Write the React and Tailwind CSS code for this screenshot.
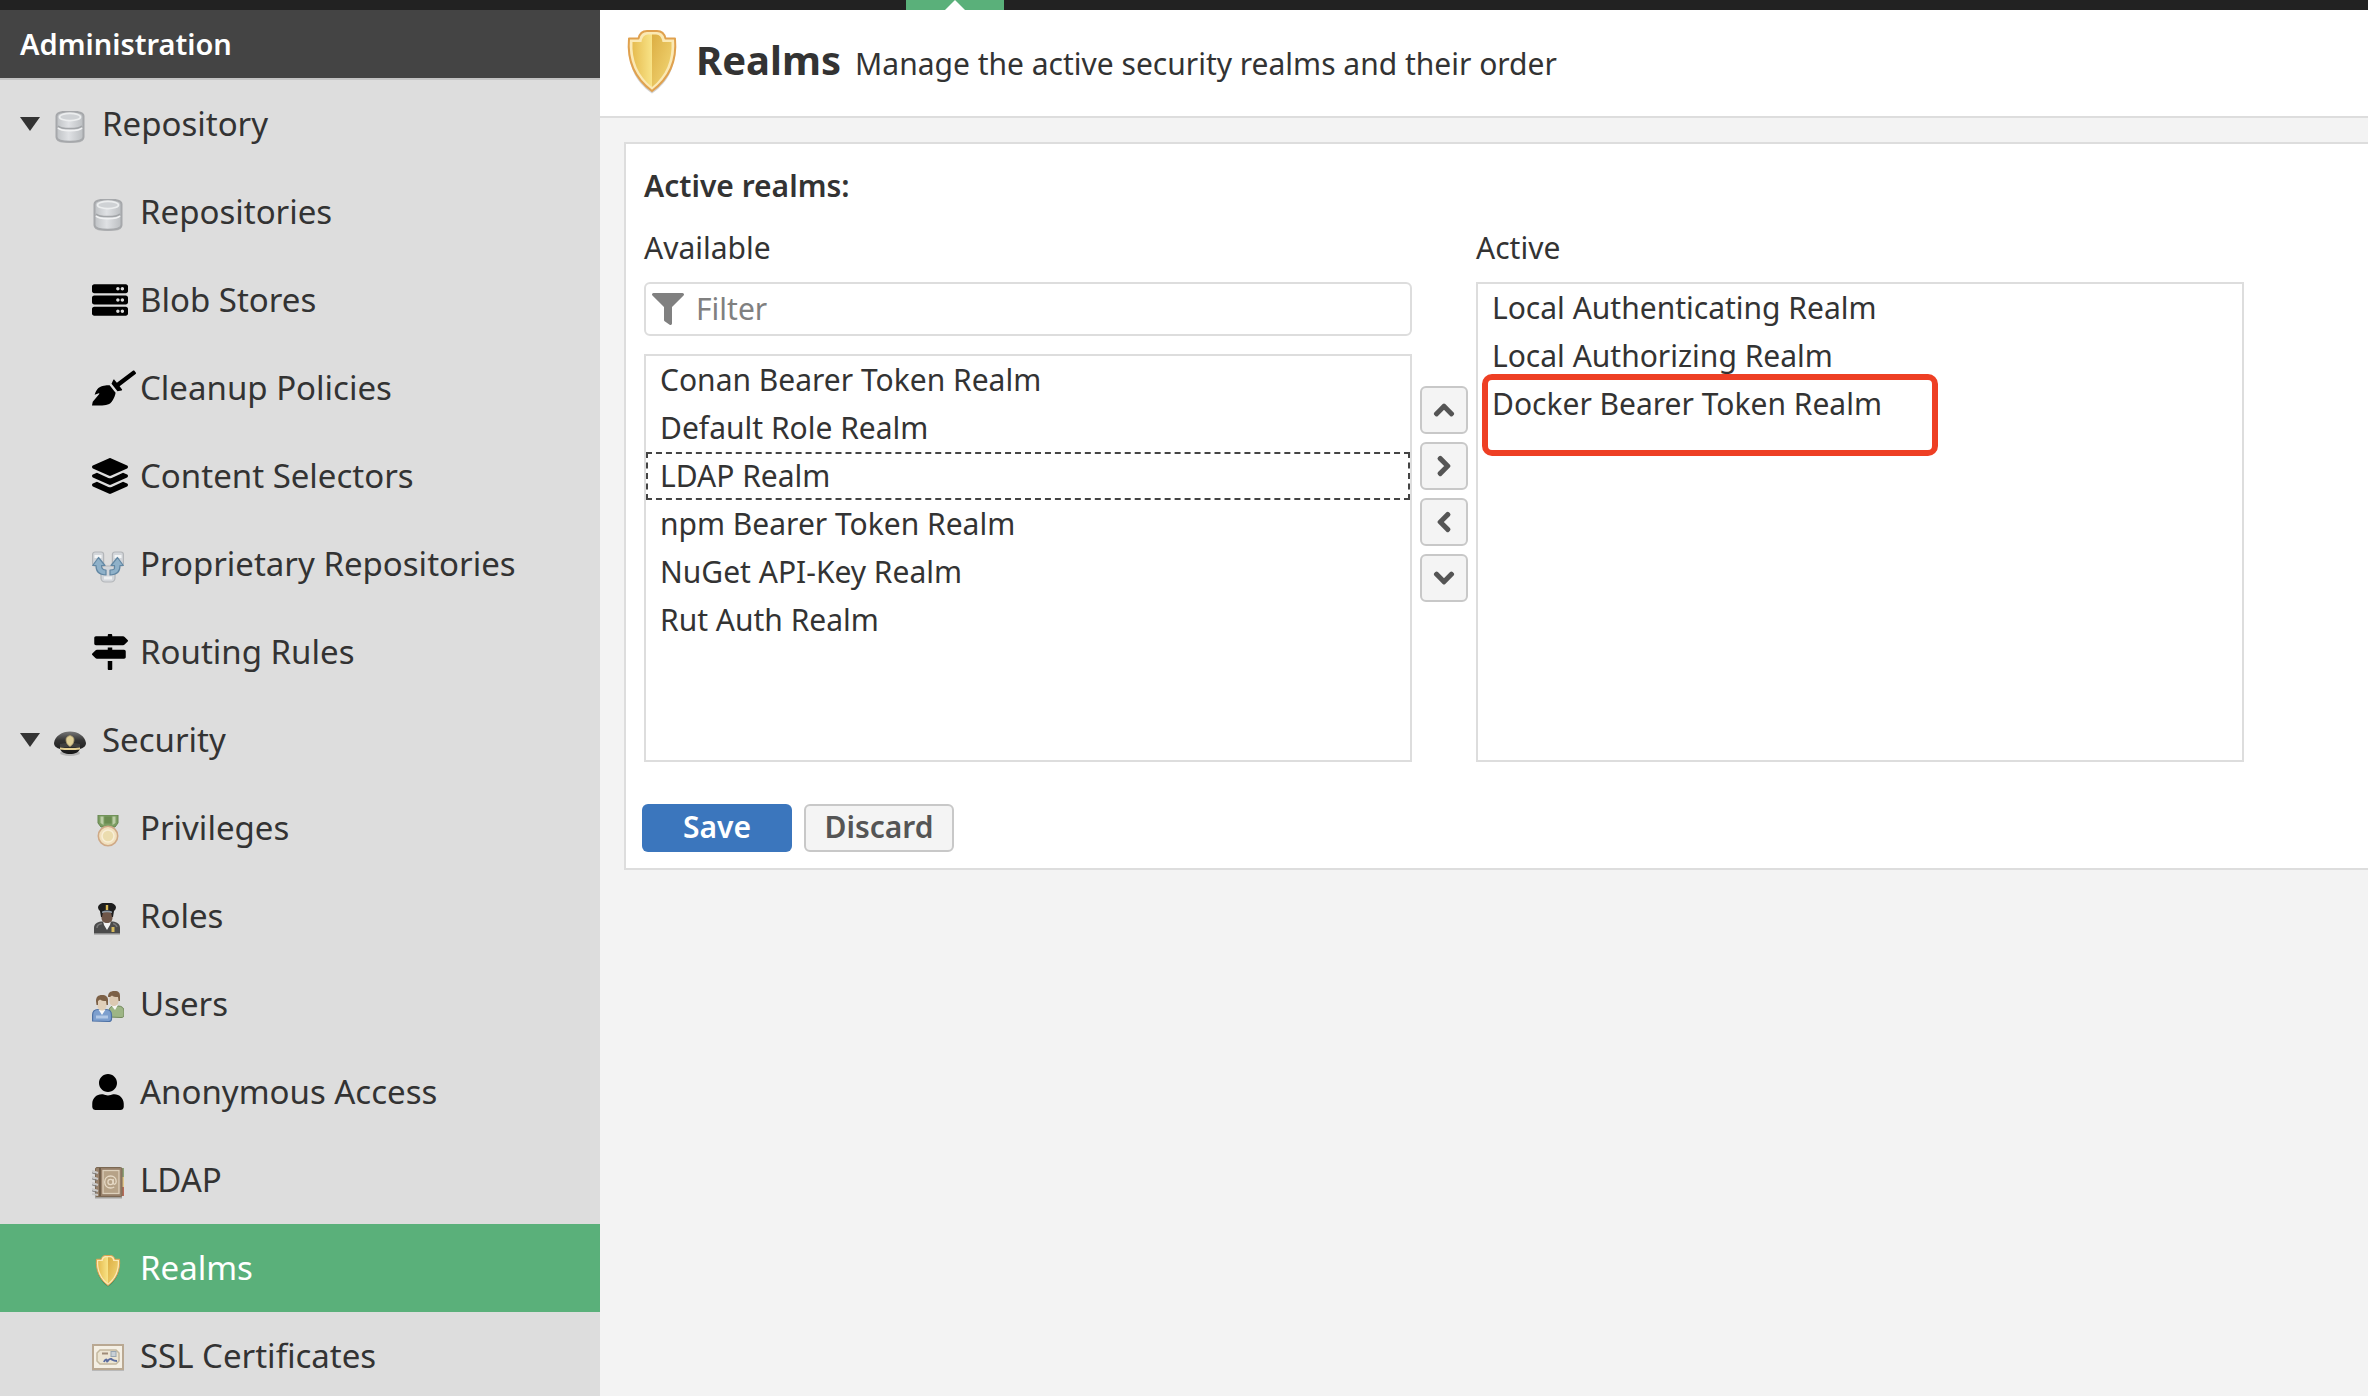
import React, { useState } from "react";
import {
  FaBroom,
  FaChevronDown,
  FaChevronLeft,
  FaChevronRight,
  FaChevronUp,
  FaFilter,
  FaLayerGroup,
  FaMapSigns,
  FaServer,
  FaUser,
} from "react-icons/fa";

/* ---------- small pictorial icons ---------- */

function DatabaseIcon() {
  return (
    <svg viewBox="0 0 32 32" className="mt-1.5 size-8" aria-hidden="true">
      <defs>
        <linearGradient id="db" x1="0" x2="1" y1="0" y2="0">
          <stop offset="0" stopColor="#bfc2c5" />
          <stop offset="0.45" stopColor="#dfe1e4" />
          <stop offset="1" stopColor="#bbbec1" />
        </linearGradient>
      </defs>
      <path d="M2.500 26h27v2c0 3-5 4-13.500 4S2.500 31 2.500 28z" fill="#a9abad" opacity="0.700" />
      <path d="M2.500 5c0-3.500 5-4.500 13.500-4.500S29.500 1.500 29.500 5v21c0 3.500-5 4.700-13.500 4.700S2.500 29.500 2.500 26z" fill="url(#db)" stroke="#a6a8ab" strokeWidth="2" />
      <ellipse cx="16" cy="6" rx="10.500" ry="3.600" fill="#cfd2d5" stroke="#eceeef" strokeWidth="1.700" />
      <path d="M4 15c2 2.200 7 2.700 12 2.700s10-.5 12-2.700" fill="none" stroke="#a2a5a8" strokeWidth="1.800" />
      <path d="M4 17c2 2.200 7 2.700 12 2.700s10-.5 12-2.700" fill="none" stroke="#f1f2f3" strokeWidth="1.800" />
    </svg>
  );
}

function ProprietaryIcon() {
  return (
    <svg viewBox="0 0 32 32" className="mt-1.5 size-8" aria-hidden="true">
      <g fill="#d3d6da" stroke="#b3b6b9" strokeWidth="1.200">
        <rect x="0.600" y="1" width="11" height="14" rx="2.500" />
        <rect x="20.400" y="1" width="11" height="14" rx="2.500" />
        <rect x="9" y="15" width="14" height="16" rx="4" />
      </g>
      <path d="M2.500 5.500h7M22.500 5.500h7" stroke="#f3f5f6" strokeWidth="3" />
      <path d="M12 27h8" stroke="#edeff0" strokeWidth="3" />
      <g fill="#8fb1c9" stroke="#6287a3" strokeWidth="1.200" strokeLinejoin="round">
        <path d="M6.500 6.500l6.500 8H9.500c0 3 1.200 4.500 4.500 4.500v5C7 24 4 21 4 14.500H.7z" />
        <path d="M25.500 6.500l-6.500 8h3.500c0 3 1 4.500-4.500 4.500v5c7 0 10-3 10-9.500h3.300z" />
      </g>
    </svg>
  );
}

function CapIcon() {
  return (
    <svg viewBox="0 0 32 32" className="mt-1.5 size-8" aria-hidden="true">
      <defs>
        <linearGradient id="cap" x1="0" x2="0" y1="0" y2="1">
          <stop offset="0" stopColor="#777" />
          <stop offset="0.400" stopColor="#333" />
          <stop offset="1" stopColor="#161616" />
        </linearGradient>
      </defs>
      <ellipse cx="16" cy="26" rx="10" ry="3" fill="#999" opacity="0.600" />
      <path d="M0 16C1 9 8 4.500 16 4.500S31 9 32 16c0 3.500-3 5-6 6-1 3-5 5-10 5s-9-2-10-5c-3-1-6-2.500-6-6z" fill="url(#cap)" />
      <path d="M6 17c3-1.500 17-1.500 20 0v4c-4-1-16-1-20 0z" fill="#3f3f3f" />
      <path d="M6 20.500c5 .8 15 .8 20 0v2c-5 .8-15 .8-20 0z" fill="#e4cf92" />
      <path d="M16 8.500c2.500.8 4 2 4 4.500s-1.500 5-4 6.500c-2.500-1.500-4-4-4-6.500s1.500-3.700 4-4.500z" fill="#dfcf97" stroke="#a7976a" strokeWidth="0.800" />
    </svg>
  );
}

function MedalIcon() {
  return (
    <svg viewBox="0 0 32 32" className="mt-1.5 size-8" aria-hidden="true">
      <path d="M6 0h20v8l-3 4H9L6 8z" fill="#7d9e63" stroke="#668550" strokeWidth="1" />
      <path d="M8.500 1.500h3V10L8.500 8zM20.500 1.500h3V8l-3 2z" fill="#bccda6" />
      <path d="M12.500 1.500h7v7h-7z" fill="#6b8c50" />
      <circle cx="16" cy="21" r="9.700" fill="#f1e0bd" stroke="#cfa986" strokeWidth="1.600" />
      <circle cx="16" cy="21" r="6" fill="#ebdcae" stroke="#f8eed6" strokeWidth="1.500" />
    </svg>
  );
}

function OfficerIcon() {
  return (
    <svg viewBox="0 0 32 32" className="mt-1.5 size-8" aria-hidden="true">
      <path d="M2 31v-6c0-4 3-6 7-6.500h12c4 .5 7 2.500 7 6.500v6z" fill="#4b4b4b" />
      <path d="M2 30h26v1.500H2z" fill="#8b8b8b" />
      <path d="M5 25c0-3 2-4 5-4.500M25 24c-.5-2-2-3-4-3.500" fill="none" stroke="#767676" strokeWidth="1.500" />
      <path d="M11 18h8l-1 4-3 5-3-5z" fill="#f2f2f2" />
      <path d="M9.500 9h11v6c0 3-2.500 5-5.500 5s-5.500-2-5.500-5z" fill="#6f5648" />
      <path d="M6 4c1-3 4-4.500 9-4.500S23 1 24 4c0 2-1 3-2 4l-1 6h-1l-1-5h-8l-1 5H9L8 8C7 7 6 6 6 4z" fill="#1d1d1d" />
      <path d="M10 8.500c3-1.500 7-1.500 10 0v1.500c-3-1-7-1-10 0z" fill="#8e9aa5" />
      <path d="M13.800 2h2.400v5h-2.400z" fill="#d8b755" />
      <path d="M19.500 24h3v5h-3z" fill="#d5b95c" />
    </svg>
  );
}

function UsersIcon() {
  return (
    <svg viewBox="0 0 32 32" className="mt-1.5 size-8" aria-hidden="true">
      <path d="M17 26v-6c0-3 2-5 5-5h4c4 0 6 2 6 5v4c0 2-1 2.500-3 2.500z" fill="#9db585" stroke="#73895d" strokeWidth="1" />
      <path d="M19 14h7l-3 5z" fill="#f6f6f4" />
      <path d="M17.500 4h9v6c0 3-2 5-4.500 5s-4.500-2-4.500-5z" fill="#dcc9b2" />
      <path d="M16 6c0-4 2-6 6.500-6S28 2 28 5v5h-1.500L26 6c-3 0-5-.5-6-1.500L18 6z" fill="#7c6046" />
      <path d="M.6 30v-6c0-3.500 2-5.500 5.500-5.500H14c3.500 0 5.500 2 5.500 5.500v4c0 2-1 2.500-3 2.500z" fill="#7d9fce" stroke="#4d71a5" strokeWidth="1.200" />
      <path d="M4 26h12" stroke="#b2c8e6" strokeWidth="3" />
      <path d="M6.500 18.500h7L10 24z" fill="#fafafa" />
      <path d="M5.500 8h9v6.500c0 3-2 5-4.500 5s-4.500-2-4.500-5z" fill="#e0cfb9" />
      <path d="M4 10c0-4 2-6 6-6s6 2 6 5v5h-1.500L14 10c-3 0-4.500-.5-6-1.500L6 10v4H4.500z" fill="#7c6046" />
    </svg>
  );
}

function AddressBookIcon() {
  return (
    <svg viewBox="0 0 32 32" className="mt-1.5 size-8" aria-hidden="true">
      <path d="M28 1h4v9h-4z" fill="#8fa37a" />
      <path d="M28 10h4v10h-4z" fill="#e3c78c" />
      <path d="M28 20h4v9h-4z" fill="#b86c58" />
      <path d="M3 29h27v2.500H3z" fill="#a3a09c" />
      <rect x="3.500" y="0.500" width="26.500" height="29" rx="1.500" fill="#97806a" stroke="#7b6853" strokeWidth="1" />
      <path d="M8 1v28" stroke="#6f5d49" strokeWidth="2" />
      <rect x="11" y="3.500" width="16" height="23" fill="#b6a287" stroke="#ddd0bb" strokeWidth="1.300" />
      <circle cx="18.500" cy="15" r="2.600" fill="none" stroke="#e6dac6" strokeWidth="1.300" />
      <path d="M21.200 12v4.500c1 1.500 3 .5 3-2 0-3.500-2.500-5.500-5.500-5.500-3.500 0-6 2.500-6 6s2.500 6 6 6c1.500 0 2.500-.3 3.500-1" fill="none" stroke="#e6dac6" strokeWidth="1.300" />
      <g stroke="#c9c9c9" strokeWidth="2">
        <path d="M0 4l6 2M0 10l6 2M0 16l6 2M0 22l6 2M0 27l6 1" />
      </g>
      <g stroke="#7f7f7f" strokeWidth="1">
        <path d="M0 5.800l5 1.700M0 11.800l5 1.700M0 17.800l5 1.700M0 23.800l5 1.700" />
      </g>
    </svg>
  );
}

function CertificateIcon() {
  return (
    <svg viewBox="0 0 32 32" className="mt-1.5 size-8" aria-hidden="true">
      <path d="M0 26h32v2H0z" fill="#a9a9a9" opacity="0.700" />
      <rect x="1" y="2" width="30" height="24" fill="#f4efe4" stroke="#b9a892" strokeWidth="2" />
      <path d="M8 7h16l3 3v8l-3 3H8l-3-3v-8z" fill="#ece5d3" stroke="#c3b89f" strokeWidth="1.500" />
      <path d="M10 10.500h6" stroke="#a08c78" strokeWidth="2" />
      <rect x="19" y="8.500" width="5" height="5" fill="#c8d0d6" stroke="#98a6b0" strokeWidth="1" />
      <path d="M12 19c1-3 3-3 3-1s2-3 4-2 2 2 6 2" fill="none" stroke="#5b6c9e" strokeWidth="2" />
    </svg>
  );
}

function ShieldIcon({ className }) {
  return (
    <svg viewBox="0 0 64 64" className={className} aria-hidden="true">
      <defs>
        <linearGradient id="shieldLeft" x1="0" x2="1" y1="0" y2="0">
          <stop offset="0" stopColor="#e6bc50" />
          <stop offset="1" stopColor="#f8e387" />
        </linearGradient>
        <linearGradient id="shieldRight" x1="0" x2="1" y1="0" y2="1">
          <stop offset="0" stopColor="#dcae43" />
          <stop offset="1" stopColor="#f3d877" />
        </linearGradient>
      </defs>
      <path d="M9 12h46c2 22-6 40-23 51.500C15 52 7 34 9 12z" fill="#000" opacity="0.180" />
      <path d="M27 1h10c4.500 0 7.500 3 8.500 7.500H55c2 22-6 40-23 52.500C15 48.500 7 30.500 9 8.500h9.500C19.500 4 22.500 1 27 1z" fill="#fbe9b4" stroke="#e0a14e" strokeWidth="2" strokeLinejoin="round" />
      <path d="M32 4.500h-4c-3.500 0-6 3-6.500 7.500H12.500C11.500 30 18 46 32 57z" fill="url(#shieldLeft)" />
      <path d="M32 4.500h4c3.500 0 6 3 6.500 7.500h9C52.500 30 46 46 32 57z" fill="url(#shieldRight)" />
    </svg>
  );
}

/* ---------- data ---------- */

const sections = [
  {
    label: "Repository",
    icon: <DatabaseIcon />,
    items: [
      { label: "Repositories", icon: <DatabaseIcon /> },
      { label: "Blob Stores", icon: <FaServer className="size-9 text-black" /> },
      { label: "Cleanup Policies", icon: <FaBroom className="h-9 w-11 shrink-0 text-black" /> },
      { label: "Content Selectors", icon: <FaLayerGroup className="size-9 text-black" /> },
      { label: "Proprietary Repositories", icon: <ProprietaryIcon /> },
      { label: "Routing Rules", icon: <FaMapSigns className="size-9 text-black" /> },
    ],
  },
  {
    label: "Security",
    icon: <CapIcon />,
    items: [
      { label: "Privileges", icon: <MedalIcon /> },
      { label: "Roles", icon: <OfficerIcon /> },
      { label: "Users", icon: <UsersIcon /> },
      { label: "Anonymous Access", icon: <FaUser className="h-9 w-8 text-black" /> },
      { label: "LDAP", icon: <AddressBookIcon /> },
      { label: "Realms", icon: <ShieldIcon className="mt-1.5 size-8" />, current: true },
      { label: "SSL Certificates", icon: <CertificateIcon /> },
    ],
  },
];

const availableRealms = [
  "Conan Bearer Token Realm",
  "Default Role Realm",
  "LDAP Realm",
  "npm Bearer Token Realm",
  "NuGet API-Key Realm",
  "Rut Auth Realm",
];

const activeRealms = [
  "Local Authenticating Realm",
  "Local Authorizing Realm",
  "Docker Bearer Token Realm",
];

const moves = [
  { label: "Move up", Icon: FaChevronUp },
  { label: "Add to active", Icon: FaChevronRight },
  { label: "Remove from active", Icon: FaChevronLeft },
  { label: "Move down", Icon: FaChevronDown },
];

/* ---------- layout parts ---------- */

function TopBar() {
  return (
    <div className="flex h-2.5 shrink-0 bg-[#222]">
      <div className="ml-[906px] flex w-[98px] justify-center bg-[#5ab07a]">
        <svg viewBox="0 0 20 10" className="h-2.5 w-5" aria-hidden="true">
          <path d="M10 0l10 10H0z" fill="#fff" />
        </svg>
      </div>
    </div>
  );
}

function Section({ label, icon, items }) {
  const [open, setOpen] = useState(true);
  return (
    <li>
      <button
        type="button"
        aria-expanded={open}
        onClick={() => setOpen(!open)}
        className="flex h-22 w-full items-center pl-5 text-left"
      >
        <svg viewBox="0 0 20 14" className="mr-3.5 h-3.5 w-5" aria-hidden="true">
          <path d="M0 0h20L10 14z" fill="#333" />
        </svg>
        <span className="flex w-12 items-center">{icon}</span>
        <span>{label}</span>
      </button>
      {open && (
        <ul>
          {items.map((item) => (
            <li key={item.label}>
              <a
                href="#"
                aria-current={item.current ? "page" : undefined}
                className={
                  item.current
                    ? "flex h-22 items-center bg-[#5ab07a] pl-[92px] text-white"
                    : "flex h-22 items-center pl-[92px]"
                }
              >
                <span className="flex w-12 shrink-0 items-center">{item.icon}</span>
                <span>{item.label}</span>
              </a>
            </li>
          ))}
        </ul>
      )}
    </li>
  );
}

function Sidebar() {
  return (
    <nav aria-label="Administration" className="w-[600px] shrink-0 overflow-hidden bg-[#ddd]">
      <h2 className="flex h-[70px] items-center border-b-2 border-[#c3c3c3] bg-[#444] pl-5 text-[29px] font-semibold text-white">
        Administration
      </h2>
      <ul className="text-[33px] leading-10">
        {sections.map((section) => (
          <Section key={section.label} {...section} />
        ))}
      </ul>
    </nav>
  );
}

export default function App() {
  const [filter, setFilter] = useState("");
  const shown = availableRealms.filter((name) => name.toLowerCase().includes(filter.toLowerCase()));

  return (
    <div className="flex h-screen flex-col bg-[#f3f3f3] font-['Noto_Sans',sans-serif] text-[30px] leading-10 text-[#333]">
      <TopBar />
      <div className="flex min-h-0 flex-1">
        <Sidebar />
        <main className="min-w-0 flex-1 overflow-hidden">
          <header className="flex h-[108px] items-start border-b-2 border-[#ddd] bg-white pt-5 pl-5">
            <ShieldIcon className="size-16 shrink-0" />
            <div className="ml-3 flex items-baseline gap-3.5">
              <h1 className="text-[40px] leading-[60px] font-bold">Realms</h1>
              <p>Manage the active security realms and their order</p>
            </div>
          </header>

          <form
            onSubmit={(event) => event.preventDefault()}
            className="mt-6 ml-6 border-y-2 border-l-2 border-[#ddd] bg-white pt-[22px] pr-31 pb-4 pl-4"
          >
            <h2 className="pl-0.5 font-semibold">Active realms:</h2>

            <div className="mt-[22px] flex pl-0.5">
              <section className="flex min-w-0 flex-1 flex-col">
                <h3 id="available">Available</h3>
                <label className="mt-3.5 flex h-[54px] items-center rounded-md border-2 border-[#ddd] pl-1.5">
                  <FaFilter className="size-8 shrink-0 text-[#808080]" aria-hidden="true" />
                  <input
                    type="text"
                    aria-label="Filter"
                    placeholder="Filter"
                    value={filter}
                    onChange={(event) => setFilter(event.target.value)}
                    className="ml-3 min-w-0 flex-1 outline-none placeholder:text-[#808080]"
                  />
                </label>
                <ul role="listbox" aria-labelledby="available" className="mt-[18px] h-[408px] border-2 border-[#ddd]">
                  {shown.map((name) => (
                    <li
                      key={name}
                      role="option"
                      aria-selected={false}
                      className={
                        name === "LDAP Realm"
                          ? "flex h-12 items-center border-2 border-dashed border-[#444] px-3"
                          : "flex h-12 items-center px-3.5"
                      }
                    >
                      {name}
                    </li>
                  ))}
                </ul>
              </section>

              <div className="mx-2 mb-0.5 flex flex-col gap-2 self-center">
                {moves.map(({ label, Icon }) => (
                  <button
                    key={label}
                    type="button"
                    aria-label={label}
                    className="flex size-12 items-center justify-center rounded-md border-2 border-[#c8c8c8] bg-[#f4f4f4] text-[#555]"
                  >
                    <Icon className="size-[22px] overflow-visible stroke-current stroke-[36px]" aria-hidden="true" />
                  </button>
                ))}
              </div>

              <section className="flex min-w-0 flex-1 flex-col">
                <h3 id="active">Active</h3>
                <ul role="listbox" aria-labelledby="active" className="mt-3.5 flex-1 border-2 border-[#ddd]">
                  {activeRealms.map((name) => (
                    <li key={name} role="option" aria-selected={false} className="relative flex h-12 items-center px-3.5">
                      {name}
                      {name === "Docker Bearer Token Realm" && (
                        <span className="pointer-events-none absolute -top-1.5 left-1 h-[82px] w-[456px] rounded-[10px] border-6 border-[#ee3f24]" />
                      )}
                    </li>
                  ))}
                </ul>
              </section>
            </div>

            <div className="mt-[42px] flex gap-3">
              <button type="submit" className="h-12 w-[150px] rounded-md bg-[#3b76bd] pb-0.5 font-semibold text-white">
                Save
              </button>
              <button
                type="button"
                className="flex h-12 w-[150px] items-center justify-center rounded-md border-2 border-[#c8c8c8] bg-[#f4f4f4] pb-0.5 font-semibold text-[#555]"
              >
                Discard
              </button>
            </div>
          </form>
        </main>
      </div>
    </div>
  );
}
